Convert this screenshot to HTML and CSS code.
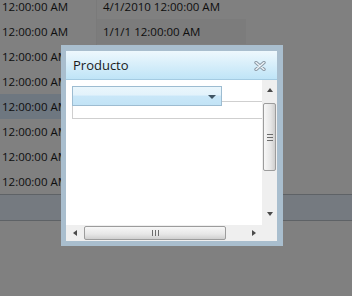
FILE: index.html
```html
<!DOCTYPE html>
<html lang="es">

<head>
    <meta charset="UTF-8">
    <meta name="viewport" content="width=device-width, initial-scale=1.0">
    <title>Producto</title>
    <link rel="stylesheet" href="styles.css">
</head>

<body>
    <!-- grilla de fondo -->
    <div class="grid">
        <div class="row">
            <div class="cell cell-time">12:00:00 AM</div>
            <div class="cell cell-date">4/1/2010 12:00:00 AM</div>
        </div>
        <div class="row">
            <div class="cell cell-time">12:00:00 AM</div>
            <div class="cell cell-date cell-shade">1/1/1 12:00:00 AM</div>
        </div>
        <div class="row">
            <div class="cell cell-time">12:00:00 AM</div>
            <div class="cell cell-date"></div>
        </div>
        <div class="row">
            <div class="cell cell-time">12:00:00 AM</div>
            <div class="cell cell-date"></div>
        </div>
        <div class="row row-selected">
            <div class="cell cell-time">12:00:00 AM</div>
            <div class="cell cell-date"></div>
        </div>
        <div class="row">
            <div class="cell cell-time">12:00:00 AM</div>
            <div class="cell cell-date"></div>
        </div>
        <div class="row">
            <div class="cell cell-time">12:00:00 AM</div>
            <div class="cell cell-date"></div>
        </div>
        <div class="row">
            <div class="cell cell-time">12:00:00 AM</div>
            <div class="cell cell-date"></div>
        </div>
        <div class="band"></div>
    </div>

    <!-- ventana Producto -->
    <div class="dialog">
        <div class="dialog-header">
            <span class="dialog-title">Producto</span>
            <svg class="dialog-close" width="12" height="10" viewBox="0 0 12 10">
                <path d="M2 1.5 L10 8.5 M10 1.5 L2 8.5" stroke="#8c9aa6" stroke-width="3.4" stroke-linecap="round" fill="none" />
                <path d="M2 1.5 L10 8.5 M10 1.5 L2 8.5" stroke="#eef4f8" stroke-width="1.4" stroke-linecap="round" fill="none" />
            </svg>
        </div>
        <div class="dialog-body">
            <div class="content">
                <div class="filter-row">
                    <div class="combo">
                        <span class="combo-arrow"></span>
                    </div>
                    <div class="filter-rest"></div>
                </div>
                <div class="data-row"></div>
            </div>
            <div class="vscroll">
                <span class="arrow arrow-up"></span>
                <div class="vthumb">
                    <span class="grip-h"></span>
                </div>
                <span class="arrow arrow-down"></span>
            </div>
            <div class="hscroll">
                <span class="arrow arrow-left"></span>
                <div class="hthumb">
                    <span class="grip-v"></span>
                </div>
                <span class="arrow arrow-right"></span>
            </div>
            <div class="corner"></div>
        </div>
    </div>
</body>

</html>
```

FILE: styles.css
```css
/* fondo */
body {
    margin: 0;
    width: 352px;
    height: 296px;
    overflow: hidden;
    background-color: #808080;
    font-family: "Open Sans", "Noto Sans", sans-serif;
    color: #0e0e0e;
}

/* grilla */
.grid {
    margin-top: -6px;
}

.row {
    display: flex;
    height: 25px;
}

.cell {
    display: flex;
    align-items: center;
    font-size: 11.5px;
    white-space: nowrap;
}

.cell-time {
    width: 94px;
    padding-left: 2px;
    border-right: 1px solid #7a7a7a;
}

.cell-date {
    width: 143px;
    padding-left: 6px;
}

.cell-shade {
    background-color: #7c7c7c;
}

.row-selected .cell {
    background-color: #6e7780;
}

.band {
    height: 25px;
    background-color: #757a80;
    border-top: 1px solid #5e6266;
    border-bottom: 1px solid #5e6266;
}

/* ventana */
.dialog {
    position: absolute;
    left: 61px;
    top: 45px;
    width: 211px;
    height: 190px;
    border-style: solid;
    border-color: #a9bece;
    border-width: 6px 6px 5px 5px;
    display: flex;
    flex-direction: column;
}

.dialog-header {
    height: 28px;
    border-bottom: 1px solid #a4cbe2;
    background: linear-gradient(to bottom, #eef8fd, #bfe4f7);
    display: flex;
    align-items: center;
    justify-content: space-between;
    padding: 0 11px 0 7px;
}

.dialog-title {
    font-size: 13px;
    color: #1a1a1a;
    margin-top: -1px;
}

.dialog-close {
    display: block;
    margin-top: 1px;
}

.dialog-body {
    flex: 1;
    display: grid;
    grid-template-columns: 196px 15px;
    grid-template-rows: 145px 16px;
    background-color: #ffffff;
}

/* contenido */
.content {
    padding: 6px 0 0 6px;
}

.filter-row {
    display: flex;
    align-items: flex-start;
}

.combo {
    width: 148px;
    height: 18px;
    border: 1px solid #9dbcd1;
    background: linear-gradient(to bottom, #eaf6fc 0%, #e2f2fb 45%, #c9e7f8 50%, #c2e3f6 100%);
    display: flex;
    align-items: center;
    justify-content: flex-end;
}

.combo-arrow {
    width: 0;
    height: 0;
    border-left: 4px solid transparent;
    border-right: 4px solid transparent;
    border-top: 4px solid #3f5564;
    margin: 2px 5px 0 0;
}

.filter-rest {
    flex: 1;
    height: 15px;
    border-bottom: 1px solid #cfcfcf;
}

.data-row {
    height: 12px;
    border-left: 1px solid #cfcfcf;
    border-bottom: 1px solid #cfcfcf;
}

/* barras de desplazamiento */
.vscroll {
    background-color: #efefef;
    display: flex;
    flex-direction: column;
    align-items: center;
    padding-top: 8px;
}

.vthumb {
    margin-top: 11px;
    width: 11px;
    height: 66px;
    border: 1px solid #9c9c9c;
    border-radius: 2px;
    background: linear-gradient(to right, #f7f7f7, #e6e6e6 60%, #cfcfcf);
    display: flex;
    align-items: center;
    justify-content: center;
}

.grip-h {
    width: 6px;
    height: 5px;
    border-top: 1px solid #6c6c6c;
    border-bottom: 1px solid #6c6c6c;
    background: linear-gradient(to bottom, transparent 2px, #6c6c6c 2px, #6c6c6c 3px, transparent 3px);
}

.hscroll {
    background-color: #efefef;
    display: flex;
    align-items: center;
    padding-left: 7px;
}

.hthumb {
    margin-left: 7px;
    width: 140px;
    height: 12px;
    border: 1px solid #9c9c9c;
    border-radius: 2px;
    background: linear-gradient(to bottom, #f7f7f7, #e6e6e6 60%, #cfcfcf);
    display: flex;
    align-items: center;
    justify-content: center;
}

.grip-v {
    width: 5px;
    height: 6px;
    border-left: 1px solid #6c6c6c;
    border-right: 1px solid #6c6c6c;
    background: linear-gradient(to right, transparent 2px, #6c6c6c 2px, #6c6c6c 3px, transparent 3px);
}

.corner {
    background-color: #efefef;
}

.arrow {
    width: 0;
    height: 0;
    border: 3px solid transparent;
}

.arrow-up {
    border-top: none;
    border-bottom: 4px solid #4a4a4a;
}

.arrow-down {
    margin-top: auto;
    margin-bottom: 9px;
    border-bottom: none;
    border-top: 4px solid #4a4a4a;
}

.arrow-left {
    border-left: none;
    border-right: 4px solid #4a4a4a;
}

.arrow-right {
    margin-left: auto;
    margin-right: 6px;
    border-right: none;
    border-left: 4px solid #4a4a4a;
}
```
